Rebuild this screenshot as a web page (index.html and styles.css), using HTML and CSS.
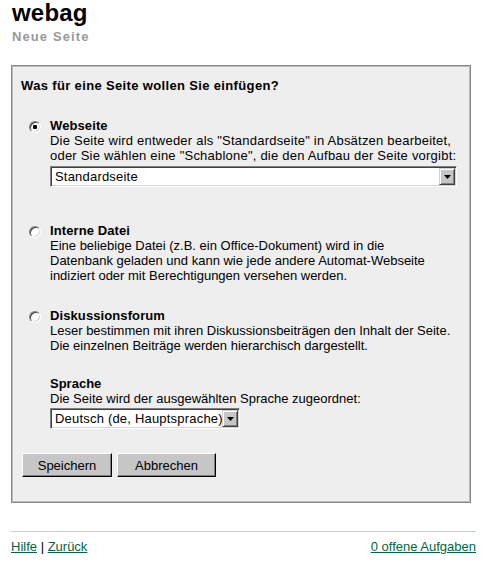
FILE: index.html
```html
<!DOCTYPE html>
<html lang="de">
<head>
  <meta charset="UTF-8"/>
  <meta name="viewport" content="width=device-width,initial-scale=1.0"/>
  <title>webag - Neue Seite</title>
  <link rel="stylesheet" href="styles.css">
</head>
<body>
  <header class="page-head">
    <h1>webag</h1>
    <div class="subtitle">Neue Seite</div>
  </header>

  <form class="panel" onsubmit="return false;">
    <h2>Was für eine Seite wollen Sie einfügen?</h2>

    <div class="option opt-web">
      <input type="radio" name="type" value="web" checked/>
      <div class="opt-body">
        <b>Webseite</b>
        <p class="wide">Die Seite wird entweder als "Standardseite" in Absätzen bearbeitet,<br/>oder Sie wählen eine "Schablone", die den Aufbau der Seite vorgibt:</p>
        <div class="combo combo-wide">
          <span class="combo-value">Standardseite</span>
          <span class="combo-btn"><svg width="7" height="4" viewBox="0 0 7 4"><polygon points="0,0 7,0 3.5,4" fill="#000"/></svg></span>
        </div>
      </div>
    </div>

    <div class="option opt-file">
      <input type="radio" name="type" value="file"/>
      <div class="opt-body">
        <b>Interne Datei</b>
        <p>Eine beliebige Datei (z.B. ein Office-Dokument) wird in die<br/>Datenbank geladen und kann wie jede andere Automat-Webseite<br/>indiziert oder mit Berechtigungen versehen werden.</p>
      </div>
    </div>

    <div class="option opt-forum">
      <input type="radio" name="type" value="forum"/>
      <div class="opt-body">
        <b>Diskussionsforum</b>
        <p>Leser bestimmen mit ihren Diskussionsbeiträgen den Inhalt der Seite.<br/>Die einzelnen Beiträge werden hierarchisch dargestellt.</p>
      </div>
    </div>

    <div class="lang">
      <b>Sprache</b>
      <p>Die Seite wird der ausgewählten Sprache zugeordnet:</p>
      <div class="combo combo-lang">
        <span class="combo-value">Deutsch (de, Hauptsprache)</span>
        <span class="combo-btn"><svg width="7" height="4" viewBox="0 0 7 4"><polygon points="0,0 7,0 3.5,4" fill="#000"/></svg></span>
      </div>
    </div>

    <div class="actions">
      <button type="submit" class="btn btn-save">Speichern</button>
      <button type="button" class="btn btn-cancel">Abbrechen</button>
    </div>
  </form>

  <footer class="footer">
    <div><a href="#">Hilfe</a> | <a href="#">Zurück</a></div>
    <a href="#">0 offene Aufgaben</a>
  </footer>
</body>
</html>
```

FILE: styles.css
```css
/* ===== Global ===== */
* { margin:0; padding:0; box-sizing:border-box; }
body { font-family:'Liberation Sans',Arial,sans-serif; font-size:13px; line-height:15px; color:#000; background:#fff; padding:0 11px; }
b { display:block; font-weight:700; }

/* ===== Header ===== */
.page-head h1 { font-size:24px; line-height:26px; font-weight:700; letter-spacing:.2px; padding-left:1px; }
.page-head .subtitle { margin-top:3px; padding-left:1px; font-weight:700; color:#999; letter-spacing:1.1px; }

/* ===== Panel ===== */
.panel { margin:21px 5px 0 0; padding:12px 9px 25px; background:#eee; border:1px solid #888; box-shadow:inset 0 0 0 1px #bbb; }
.panel h2 { font-size:13px; line-height:15px; font-weight:700; letter-spacing:.35px; }

.option { display:flex; padding-left:8px; }
.opt-web { margin-top:25px; }
.opt-file { margin-top:36px; }
.opt-forum { margin-top:25px; }
.option b { letter-spacing:.1px; }
.option p { white-space:nowrap; }
.option p.wide { letter-spacing:.22px; }
.option input[type=radio] { -webkit-appearance:none; appearance:none; flex:none; width:12px; height:12px; margin:3px 9px 0 0; border-radius:50%; background:#fff; border:1px solid; border-color:#808080 #fff #fff #808080; box-shadow:inset 1px 1px 0 #404040, inset -1px -1px 0 #d4d4d4; }
.option input[type=radio]:checked { background:radial-gradient(circle, #000 0 2px, #fff 2.5px); }

.lang { margin-top:23px; padding-left:29px; }

/* ===== Combo (select) ===== */
.combo { display:flex; height:21px; margin-top:3px; padding:1px; background:#fff; border:1px solid; border-color:#808080 #fff #fff #808080; box-shadow:inset 1px 1px 0 #404040, inset -1px -1px 0 #d4d4d4; overflow:hidden; }
.lang .combo { margin-top:2px; }
.combo-wide { width:407px; }
.combo-lang { width:190px; }
.combo-value { flex:1; padding:0 3px; line-height:17px; white-space:nowrap; overflow:hidden; letter-spacing:.2px; }
.combo-btn { flex:none; width:16px; height:17px; display:flex; align-items:center; justify-content:center; background:#c6c6c6; border:1px solid; border-color:#d4d4d4 #404040 #404040 #d4d4d4; box-shadow:inset 1px 1px 0 #fff, inset -1px -1px 0 #808080; }

/* ===== Buttons ===== */
.actions { display:flex; gap:5px; margin-top:24px; padding-left:1px; }
.btn { height:24px; font:inherit; color:#000; background:#c6c6c6; border:1px solid; border-color:#fff #000 #000 #fff; box-shadow:inset -1px -1px 0 #808080; cursor:pointer; }
.btn-save { width:90px; }
.btn-cancel { width:99px; }

/* ===== Footer ===== */
.footer { display:flex; justify-content:space-between; margin-top:28px; padding-top:7px; border-top:1px solid #ccc; }
.footer a { color:#006640; text-decoration:underline; }
```
